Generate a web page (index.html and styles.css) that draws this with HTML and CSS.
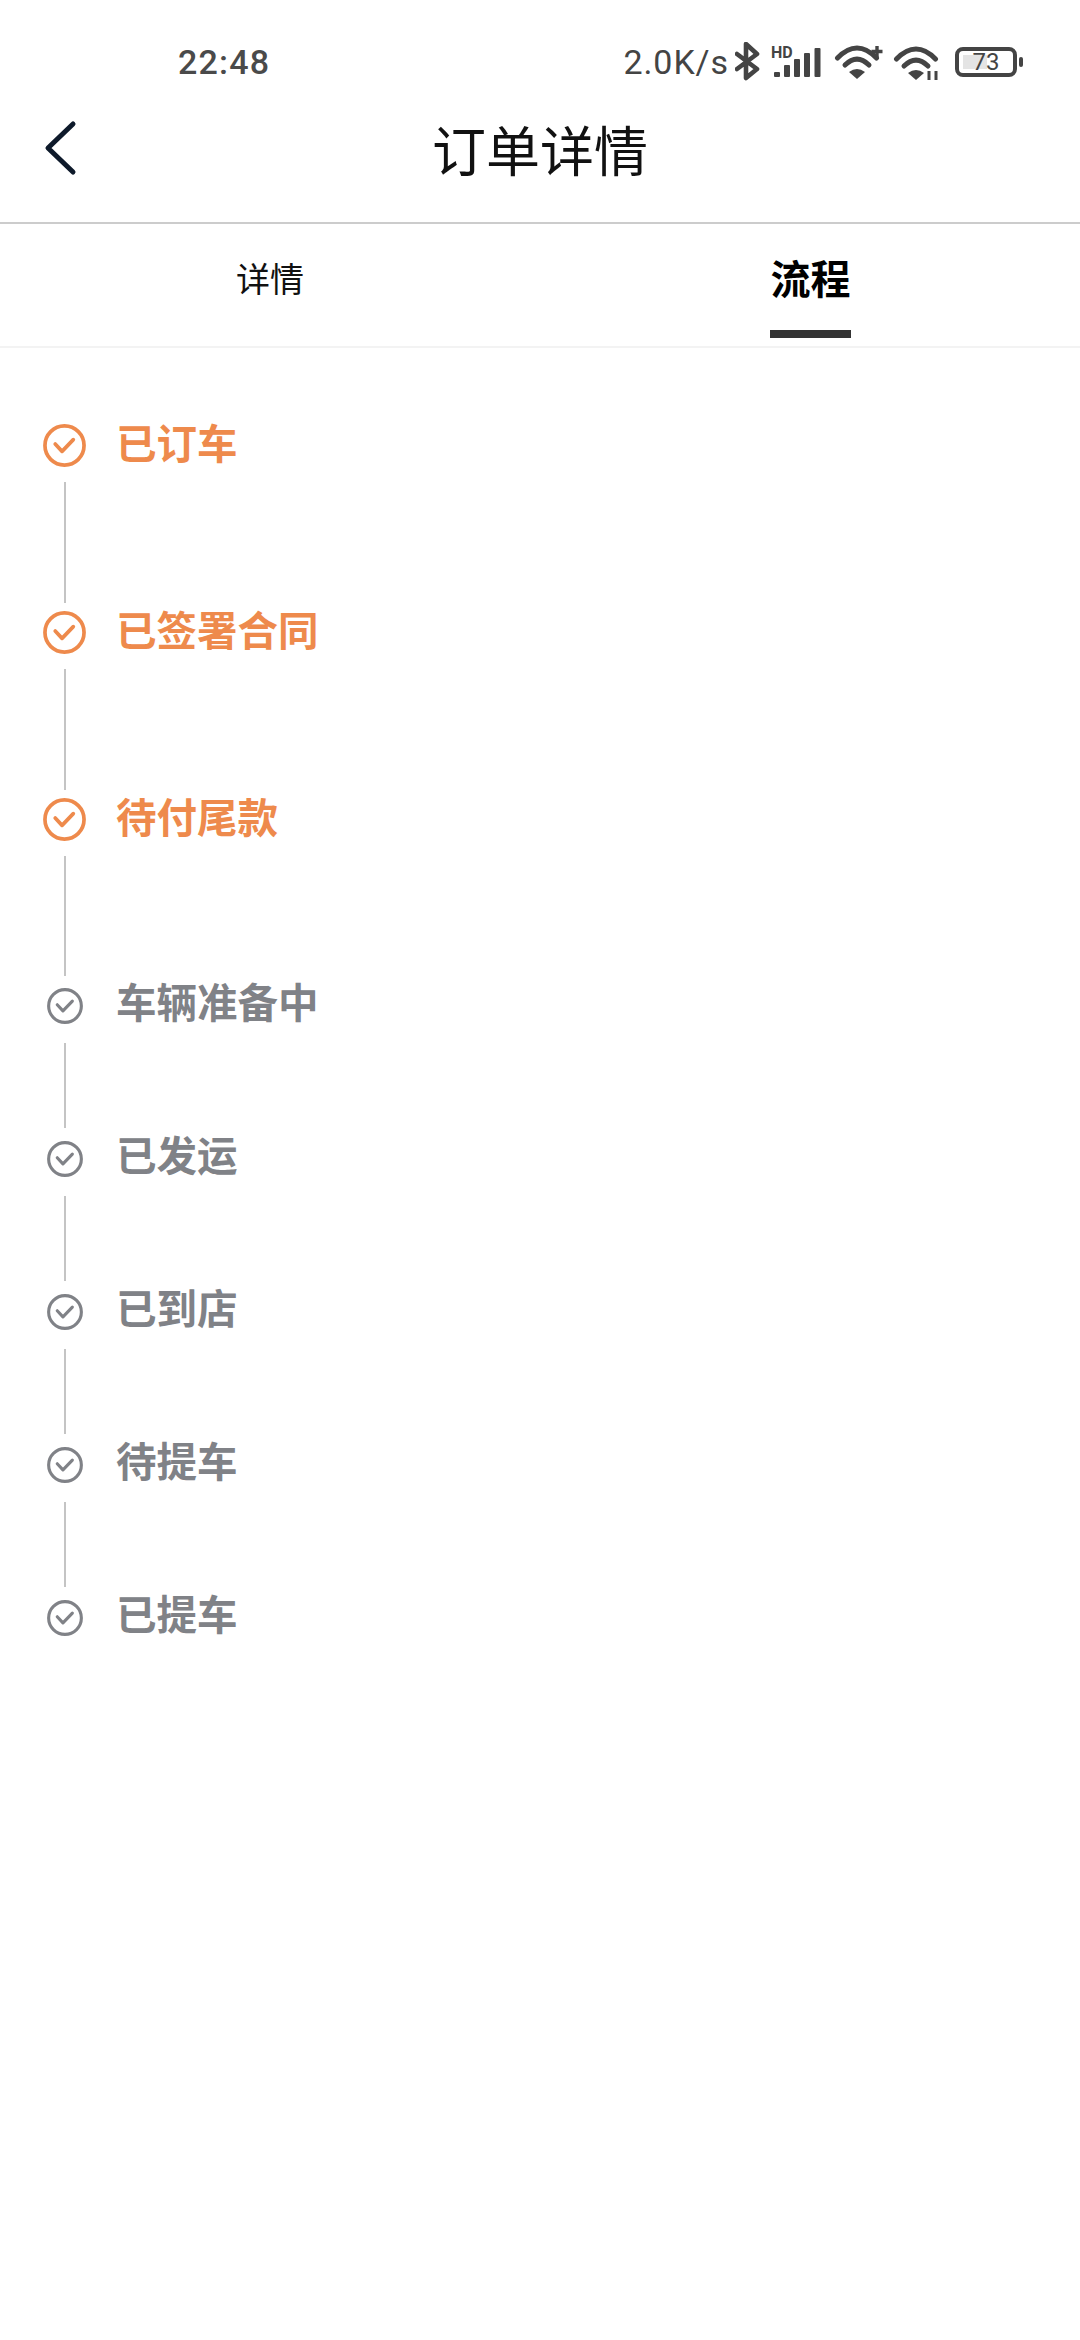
FILE: index.html
```html
<!DOCTYPE html>
<html lang="zh-CN">
<head>
<meta charset="UTF-8">
<title>订单详情</title>
<link rel="stylesheet" href="styles.css">
</head>
<body>

<svg class="defs" width="0" height="0">
  <symbol id="iconCheck" viewBox="0 0 44 44">
    <circle cx="22" cy="22" r="20" fill="none" stroke="currentColor" stroke-width="3.8"/>
    <polyline points="12.5,20.5 19.5,28 31,16" fill="none" stroke="currentColor" stroke-width="3.8" stroke-linecap="round" stroke-linejoin="round"/>
  </symbol>
  <symbol id="iconWifi" viewBox="0 0 50 36">
    <path d="M3.5 14 Q23 -6 42.5 14" fill="none" stroke="currentColor" stroke-width="5" stroke-linecap="round"/>
    <path d="M11 21 Q23 9 35 21" fill="none" stroke="currentColor" stroke-width="5" stroke-linecap="round"/>
    <path d="M15 28 Q23 22 31 28 L23 35 Z" fill="currentColor"/>
  </symbol>
</svg>

<div class="StatusBar">
  <span class="time">22:48</span>
  <div class="statusIcons">
    <span class="speed">2.0K/s</span>
    <svg class="bluetooth" width="25" height="39" viewBox="0 0 25 39">
      <polyline points="2,12 22,27 11,36 11,2 22,12 2,27" fill="none" stroke="currentColor" stroke-width="4.6" stroke-linejoin="round" stroke-linecap="round"/>
    </svg>
    <svg class="signal" width="50" height="38" viewBox="0 0 50 38">
      <text x="0" y="15" class="signalLabel">HD</text>
      <rect x="3" y="29" width="6" height="5" rx="1" fill="currentColor"/>
      <rect x="13" y="22" width="6" height="12" rx="1" fill="currentColor"/>
      <rect x="23" y="16" width="6" height="18" rx="1" fill="currentColor"/>
      <rect x="33" y="10" width="6" height="24" rx="1" fill="currentColor"/>
      <rect x="43.5" y="5" width="6" height="29" rx="1" fill="currentColor"/>
    </svg>
    <svg class="wifiPlus" width="50" height="36" viewBox="0 0 50 36">
      <use href="#iconWifi"/>
      <path d="M43 2 V13 M37.5 7.5 H48.5" stroke="currentColor" stroke-width="3.4"/>
    </svg>
    <svg class="wifiData" width="50" height="36" viewBox="0 0 50 36">
      <use href="#iconWifi"/>
      <path d="M36 26 V35 M43 26 V35" stroke="currentColor" stroke-width="3"/>
    </svg>
    <div class="battery">73</div>
    <span class="batteryNub"></span>
  </div>
</div>

<div class="Header">
  <svg class="backIcon" width="34" height="56" viewBox="0 0 34 56">
    <polyline points="30,4 5,28 30,52" fill="none" stroke="#0e1a2b" stroke-width="5" stroke-linecap="round" stroke-linejoin="round"/>
  </svg>
  <h1>订单详情</h1>
</div>

<div class="Tabs">
  <div class="tab"><span>详情</span></div>
  <div class="tab tabActive"><span>流程</span></div>
</div>

<div class="Steps">
  <div class="step stepDone">
    <div class="rail">
      <svg class="stepIcon"><use href="#iconCheck"/></svg>
      <div class="railLine"></div>
    </div>
    <p class="stepName">已订车</p>
  </div>
  <div class="step stepDone">
    <div class="rail">
      <svg class="stepIcon"><use href="#iconCheck"/></svg>
      <div class="railLine"></div>
    </div>
    <p class="stepName">已签署合同</p>
  </div>
  <div class="step stepDone stepCurrent">
    <div class="rail">
      <svg class="stepIcon"><use href="#iconCheck"/></svg>
      <div class="railLine"></div>
    </div>
    <p class="stepName">待付尾款</p>
  </div>
  <div class="step stepTodo">
    <div class="rail">
      <svg class="stepIcon"><use href="#iconCheck"/></svg>
      <div class="railLine"></div>
    </div>
    <p class="stepName">车辆准备中</p>
  </div>
  <div class="step stepTodo">
    <div class="rail">
      <svg class="stepIcon"><use href="#iconCheck"/></svg>
      <div class="railLine"></div>
    </div>
    <p class="stepName">已发运</p>
  </div>
  <div class="step stepTodo">
    <div class="rail">
      <svg class="stepIcon"><use href="#iconCheck"/></svg>
      <div class="railLine"></div>
    </div>
    <p class="stepName">已到店</p>
  </div>
  <div class="step stepTodo">
    <div class="rail">
      <svg class="stepIcon"><use href="#iconCheck"/></svg>
      <div class="railLine"></div>
    </div>
    <p class="stepName">待提车</p>
  </div>
  <div class="step stepTodo">
    <div class="rail">
      <svg class="stepIcon"><use href="#iconCheck"/></svg>
    </div>
    <p class="stepName">已提车</p>
  </div>
</div>

</body>
</html>
```

FILE: styles.css
```css
* {
  box-sizing: border-box;
  padding: 0px;
  margin: 0px;
}

body {
  width: 1080px;
  height: 2340px;
  background-color: white;
  font-family: "Noto Sans CJK SC", "Noto Sans", sans-serif;
  overflow: hidden;
}

.defs {
  display: block;
  height: 0;
}

/* top status row */
.StatusBar {
  height: 100px;
  padding: 40px 57px 0px 178px;
  display: flex;
  align-items: flex-start;
  justify-content: space-between;
  color: #444;
  font-family: Roboto, sans-serif;
}

.time {
  font-size: 34px;
  line-height: 44px;
  font-weight: 500;
  letter-spacing: 1.2px;
  color: #4a4a4a;
}

.statusIcons {
  display: flex;
  align-items: flex-start;
  font-size: 34px;
  line-height: 44px;
}

.speed {
  letter-spacing: 0.9px;
}

.bluetooth {
  margin: 2px 0px 0px 6px;
}

.signal {
  margin: 3px 0px 0px 11px;
}

.signalLabel {
  font-family: Roboto, sans-serif;
  font-size: 16px;
  font-weight: 700;
  fill: currentColor;
}

.wifiPlus {
  margin: 4px 0px 0px 13px;
}

.wifiData {
  margin: 5px 0px 0px 9px;
}

.battery {
  width: 62px;
  height: 30px;
  margin: 7px 0px 0px 12px;
  border: 4px solid #444;
  border-radius: 8px;
  background: linear-gradient(#e4e4e4, #e4e4e4) no-repeat 4px 4px / 24px 14px;
  text-align: center;
  font-size: 24px;
  line-height: 22px;
  font-weight: 400;
}

.batteryNub {
  width: 4px;
  height: 10px;
  margin: 17px 0px 0px 2px;
  border-radius: 2px;
  background-color: #444;
}

/* title row */
.Header {
  height: 124px;
  padding-bottom: 24px;
  display: flex;
  align-items: center;
  justify-content: center;
  position: relative;
  border-bottom: 2px solid #ccc;
}

.Header h1 {
  font-size: 54px;
  font-weight: 400;
  color: #111;
  line-height: 60px;
}

.backIcon {
  position: absolute;
  left: 43px;
  top: 20px;
}

/* tabs */
.Tabs {
  height: 124px;
  display: flex;
  border-bottom: 2px solid #f3f3f3;
}

.tab {
  flex: 1;
  padding-top: 34px;
  text-align: center;
  font-size: 34px;
  line-height: 40px;
  color: #111;
}

.tab span {
  display: inline-block;
}

.tabActive {
  padding-top: 33px;
  font-size: 40px;
  font-weight: 700;
  color: #000;
}

.tabActive span {
  width: 81px;
  height: 81px;
  margin-left: 1px;
  border-bottom: 8px solid #333;
}

/* progress steps */
.Steps {
  padding: 76px 0px 0px 43px;
}

.step {
  display: flex;
  font-weight: 700;
  font-size: 40.5px;
}

.rail {
  width: 43px;
  display: flex;
  flex-direction: column;
  align-items: center;
}

.railLine {
  width: 2px;
  background-color: #c4c4c4;
}

.stepName {
  margin-left: 30px;
}

.stepDone {
  height: 187px;
  color: #ee8a4c;
}

.stepDone .stepIcon {
  width: 43px;
  height: 43px;
}

.stepDone .railLine {
  height: 121px;
  margin-top: 15px;
}

.stepDone .stepName {
  line-height: 36px;
}

.stepCurrent {
  height: 190px;
}

.stepCurrent .railLine {
  height: 120px;
}

.stepTodo {
  height: 153px;
  color: #808287;
}

.stepTodo .stepIcon {
  width: 36px;
  height: 36px;
}

.stepTodo .railLine {
  height: 85px;
  margin-top: 19px;
}

.stepTodo .stepName {
  line-height: 26px;
}
```
